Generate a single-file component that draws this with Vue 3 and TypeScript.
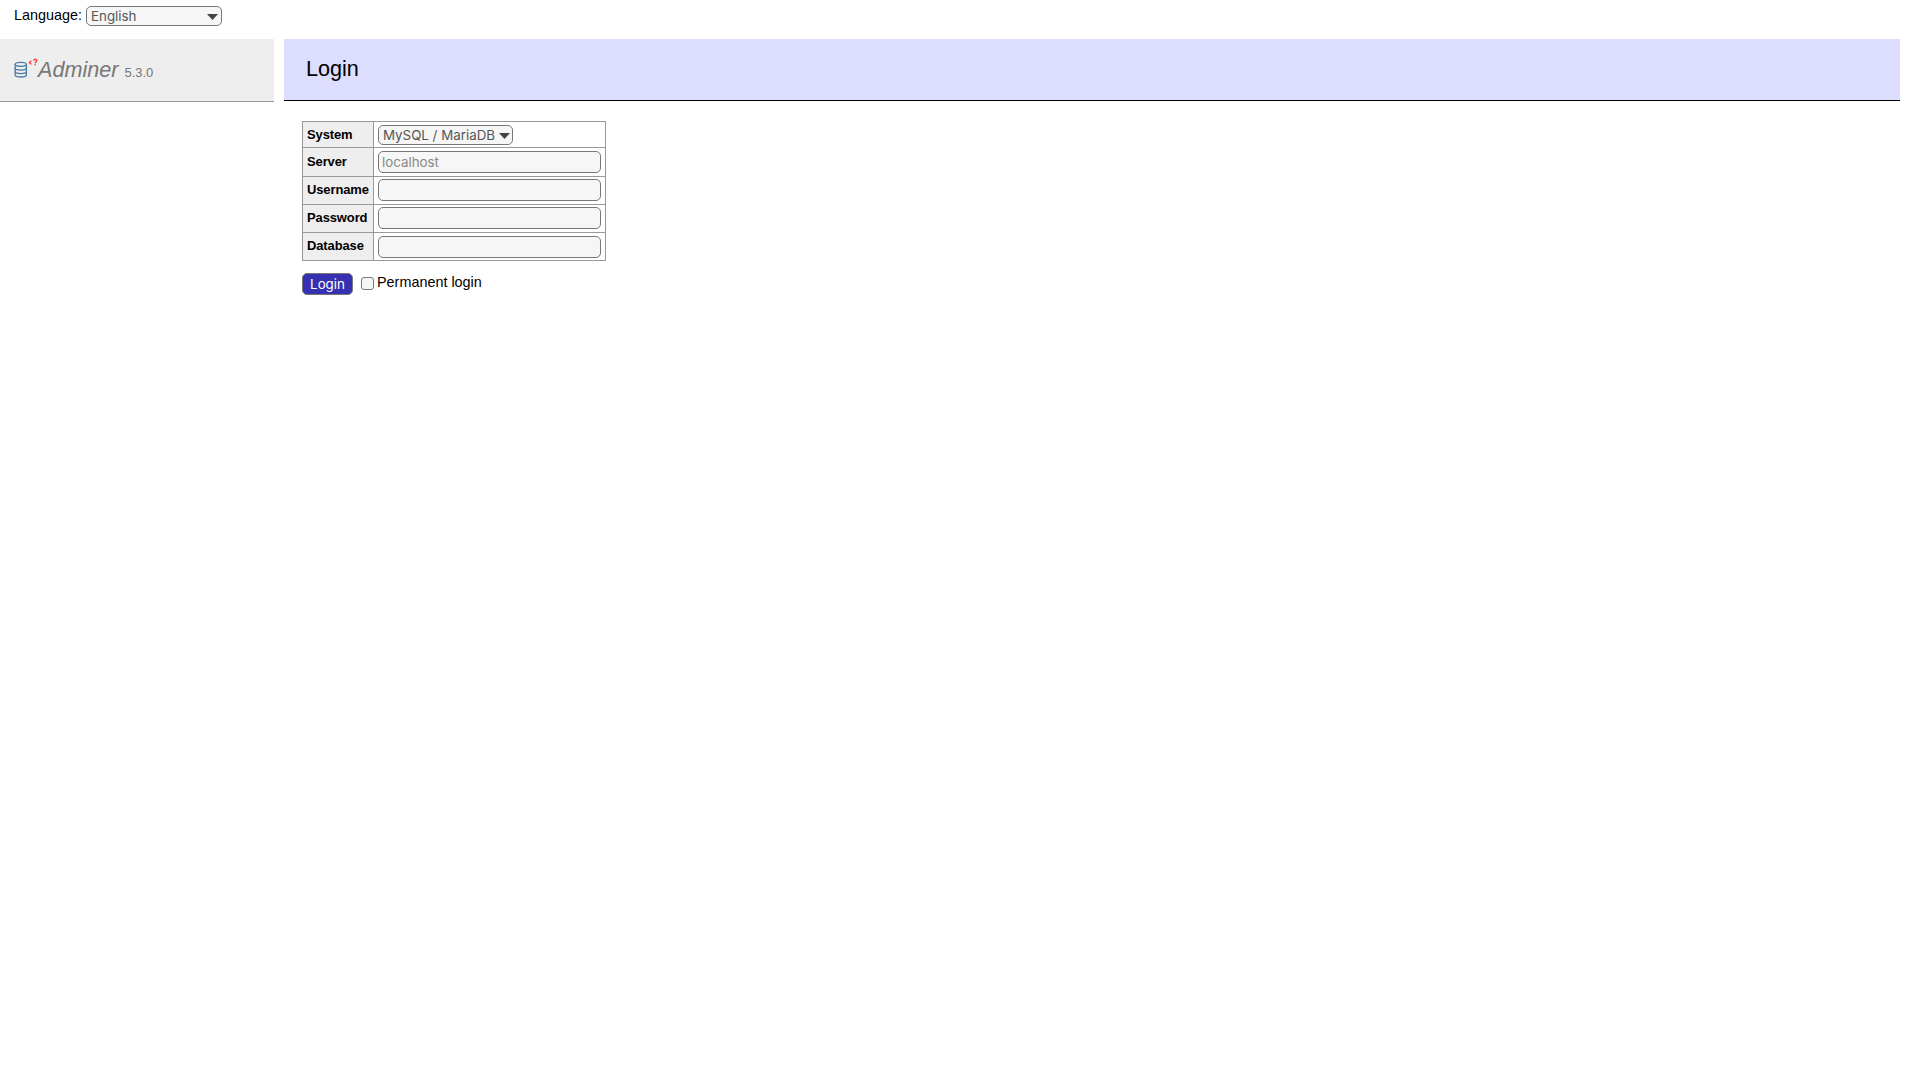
<script setup lang="ts">
const rows = ['Server', 'Username', 'Password', 'Database']
</script>

<template>
  <div class="page">
    <form class="lang">
      <label class="lang-label"><span>Language:</span><select class="sel-lang"><option>English</option></select></label>
    </form>
    <div class="columns">
      <aside class="menu">
        <h1 class="brand">
          <svg class="logo" width="24" height="24" viewBox="0 0 24 24" aria-hidden="true">
            <g fill="none" stroke="#4a7ba7" stroke-width="1.3">
              <ellipse cx="6.8" cy="8.35" rx="5.6" ry="2" />
              <path d="M1.2 8.35V19C1.2 20.5 3.8 21 6.8 21S12.4 20.5 12.4 19V8.35" />
              <path d="M1.2 12C1.2 13.5 3.8 14.1 6.8 14.1S12.4 13.5 12.4 12M1.2 15.6C1.2 17.1 3.8 17.7 6.8 17.7S12.4 17.1 12.4 15.6" />
            </g>
            <g fill="none" stroke="#f33" stroke-width="1.3">
              <path d="M17.4 4.6L15.4 6.5L17.4 8.4" />
              <path d="M19.6 4.4C20.2 2.9 22.9 3.1 22.7 4.8C22.6 5.9 21.2 6 21.2 7.2" />
              <path d="M21.2 8V9.2" />
            </g>
          </svg><span class="name">Adminer</span> <span class="version">5.3.0</span>
        </h1>
      </aside>
      <main class="content">
        <h2 class="title">Login</h2>
        <form class="login">
          <table cellspacing="0">
            <tbody>
              <tr>
                <th>System</th>
                <td><select class="sel-sys"><option>MySQL / MariaDB</option></select></td>
              </tr>
              <tr v-for="r in rows" :key="r">
                <th>{{ r }}</th>
                <td><input type="text" :placeholder="r === 'Server' ? 'localhost' : ''" /></td>
              </tr>
            </tbody>
          </table>
          <p class="actions">
            <button type="button" class="submit">Login</button>
            <label class="perm"><input type="checkbox" class="check" />Permanent login</label>
          </p>
        </form>
      </main>
    </div>
  </div>
</template>

<style scoped>
.page {
  font: 14.4px/18px "Liberation Sans", Arial, sans-serif;
  color: #000;
  width: 1900px;
}
.lang {
  height: 39px;
  padding: 6px 0 0 14px;
  box-sizing: border-box;
}
.lang-label {
  display: flex;
  align-items: flex-start;
  gap: 4px;
}
select {
  appearance: none;
  font-family: Inter, sans-serif;
  font-size: 13.33px;
  color: #555;
  box-sizing: border-box;
  height: 20px;
  padding: 0 0 0 4px;
  background-color: #f6f6f6;
  background-image: url("data:image/svg+xml,%3Csvg xmlns='http://www.w3.org/2000/svg' width='11' height='6'%3E%3Cpath d='M0 0H11L5.5 6Z' fill='%23444'/%3E%3C/svg%3E");
  background-repeat: no-repeat;
  border: 1px solid #777;
  border-radius: 5px;
}
.sel-lang {
  width: 136px;
  background-position: 120px 7px;
}
.columns {
  display: flex;
  gap: 10px;
}
.menu {
  width: 274px;
  height: 63px;
  box-sizing: border-box;
  background: #eee;
  border-bottom: 1px solid #999;
  padding: 0 0 0 14px;
}
.brand {
  margin: 0;
  font-size: 14.4px;
  font-weight: 400;
  color: #777;
  display: flex;
  align-items: baseline;
  height: 62px;
  line-height: 62px;
}
.logo {
  align-self: center;
  flex: none;
  margin-top: -4px;
}
.name {
  font-size: 21.6px;
  font-style: italic;
}
.version {
  font-size: 12.96px;
  margin-left: 6px;
}
.content {
  flex: 1;
}
.title {
  margin: 0;
  height: 62px;
  box-sizing: border-box;
  background: #ddf;
  border-bottom: 1px solid #000;
  font-size: 21.6px;
  font-weight: 400;
  line-height: 60px;
  padding-left: 22px;
}
.login {
  padding: 20px 0 0 18px;
}
table {
  border-collapse: separate;
  border-top: 1px solid #999;
  border-left: 1px solid #999;
  font-size: 12.96px;
}
th, td {
  border-right: 1px solid #999;
  border-bottom: 1px solid #999;
  padding: 3px 4px 2px;
  line-height: 16px;
  text-align: left;
}
th {
  background: #eee;
  vertical-align: top;
  padding: 5px 3px 0 4px;
  letter-spacing: -0.1px;
  min-width: 63px;
  box-sizing: content-box;
}
tr:nth-child(2) th {
  padding-top: 6px;
}
tr:nth-child(2) td {
  padding-bottom: 3px;
}
tr:nth-child(3) td,
tr:nth-child(4) td {
  padding-top: 2px;
  padding-bottom: 3px;
}
td input {
  display: block;
  box-sizing: border-box;
  width: 223px;
  height: 22px;
  padding: 0 3px;
  font-family: Inter, sans-serif;
  font-size: 13.33px;
  color: #555;
  background: #f6f6f6;
  border: 1px solid #777;
  border-radius: 5px;
}
td input::placeholder {
  color: #888;
}
.sel-sys {
  display: block;
  width: 135px;
  background-position: 120px 7px;
}
.actions {
  margin: 12px 0 0;
  display: flex;
  align-items: flex-start;
}
.submit {
  width: 51px;
  height: 22px;
  box-sizing: border-box;
  padding: 0;
  font: 13.33px Inter, sans-serif;
  color: #fff;
  background: #3730b0;
  border: 1px solid #777;
  border-radius: 5px;
}
.perm {
  display: flex;
  align-items: center;
  margin-left: 8px;
}
.check {
  appearance: none;
  box-sizing: border-box;
  margin: 2px 3px 0 0;
  width: 13px;
  height: 13px;
  background: #f6f6f6;
  border: 1px solid #777;
  border-radius: 3px;
}
</style>
